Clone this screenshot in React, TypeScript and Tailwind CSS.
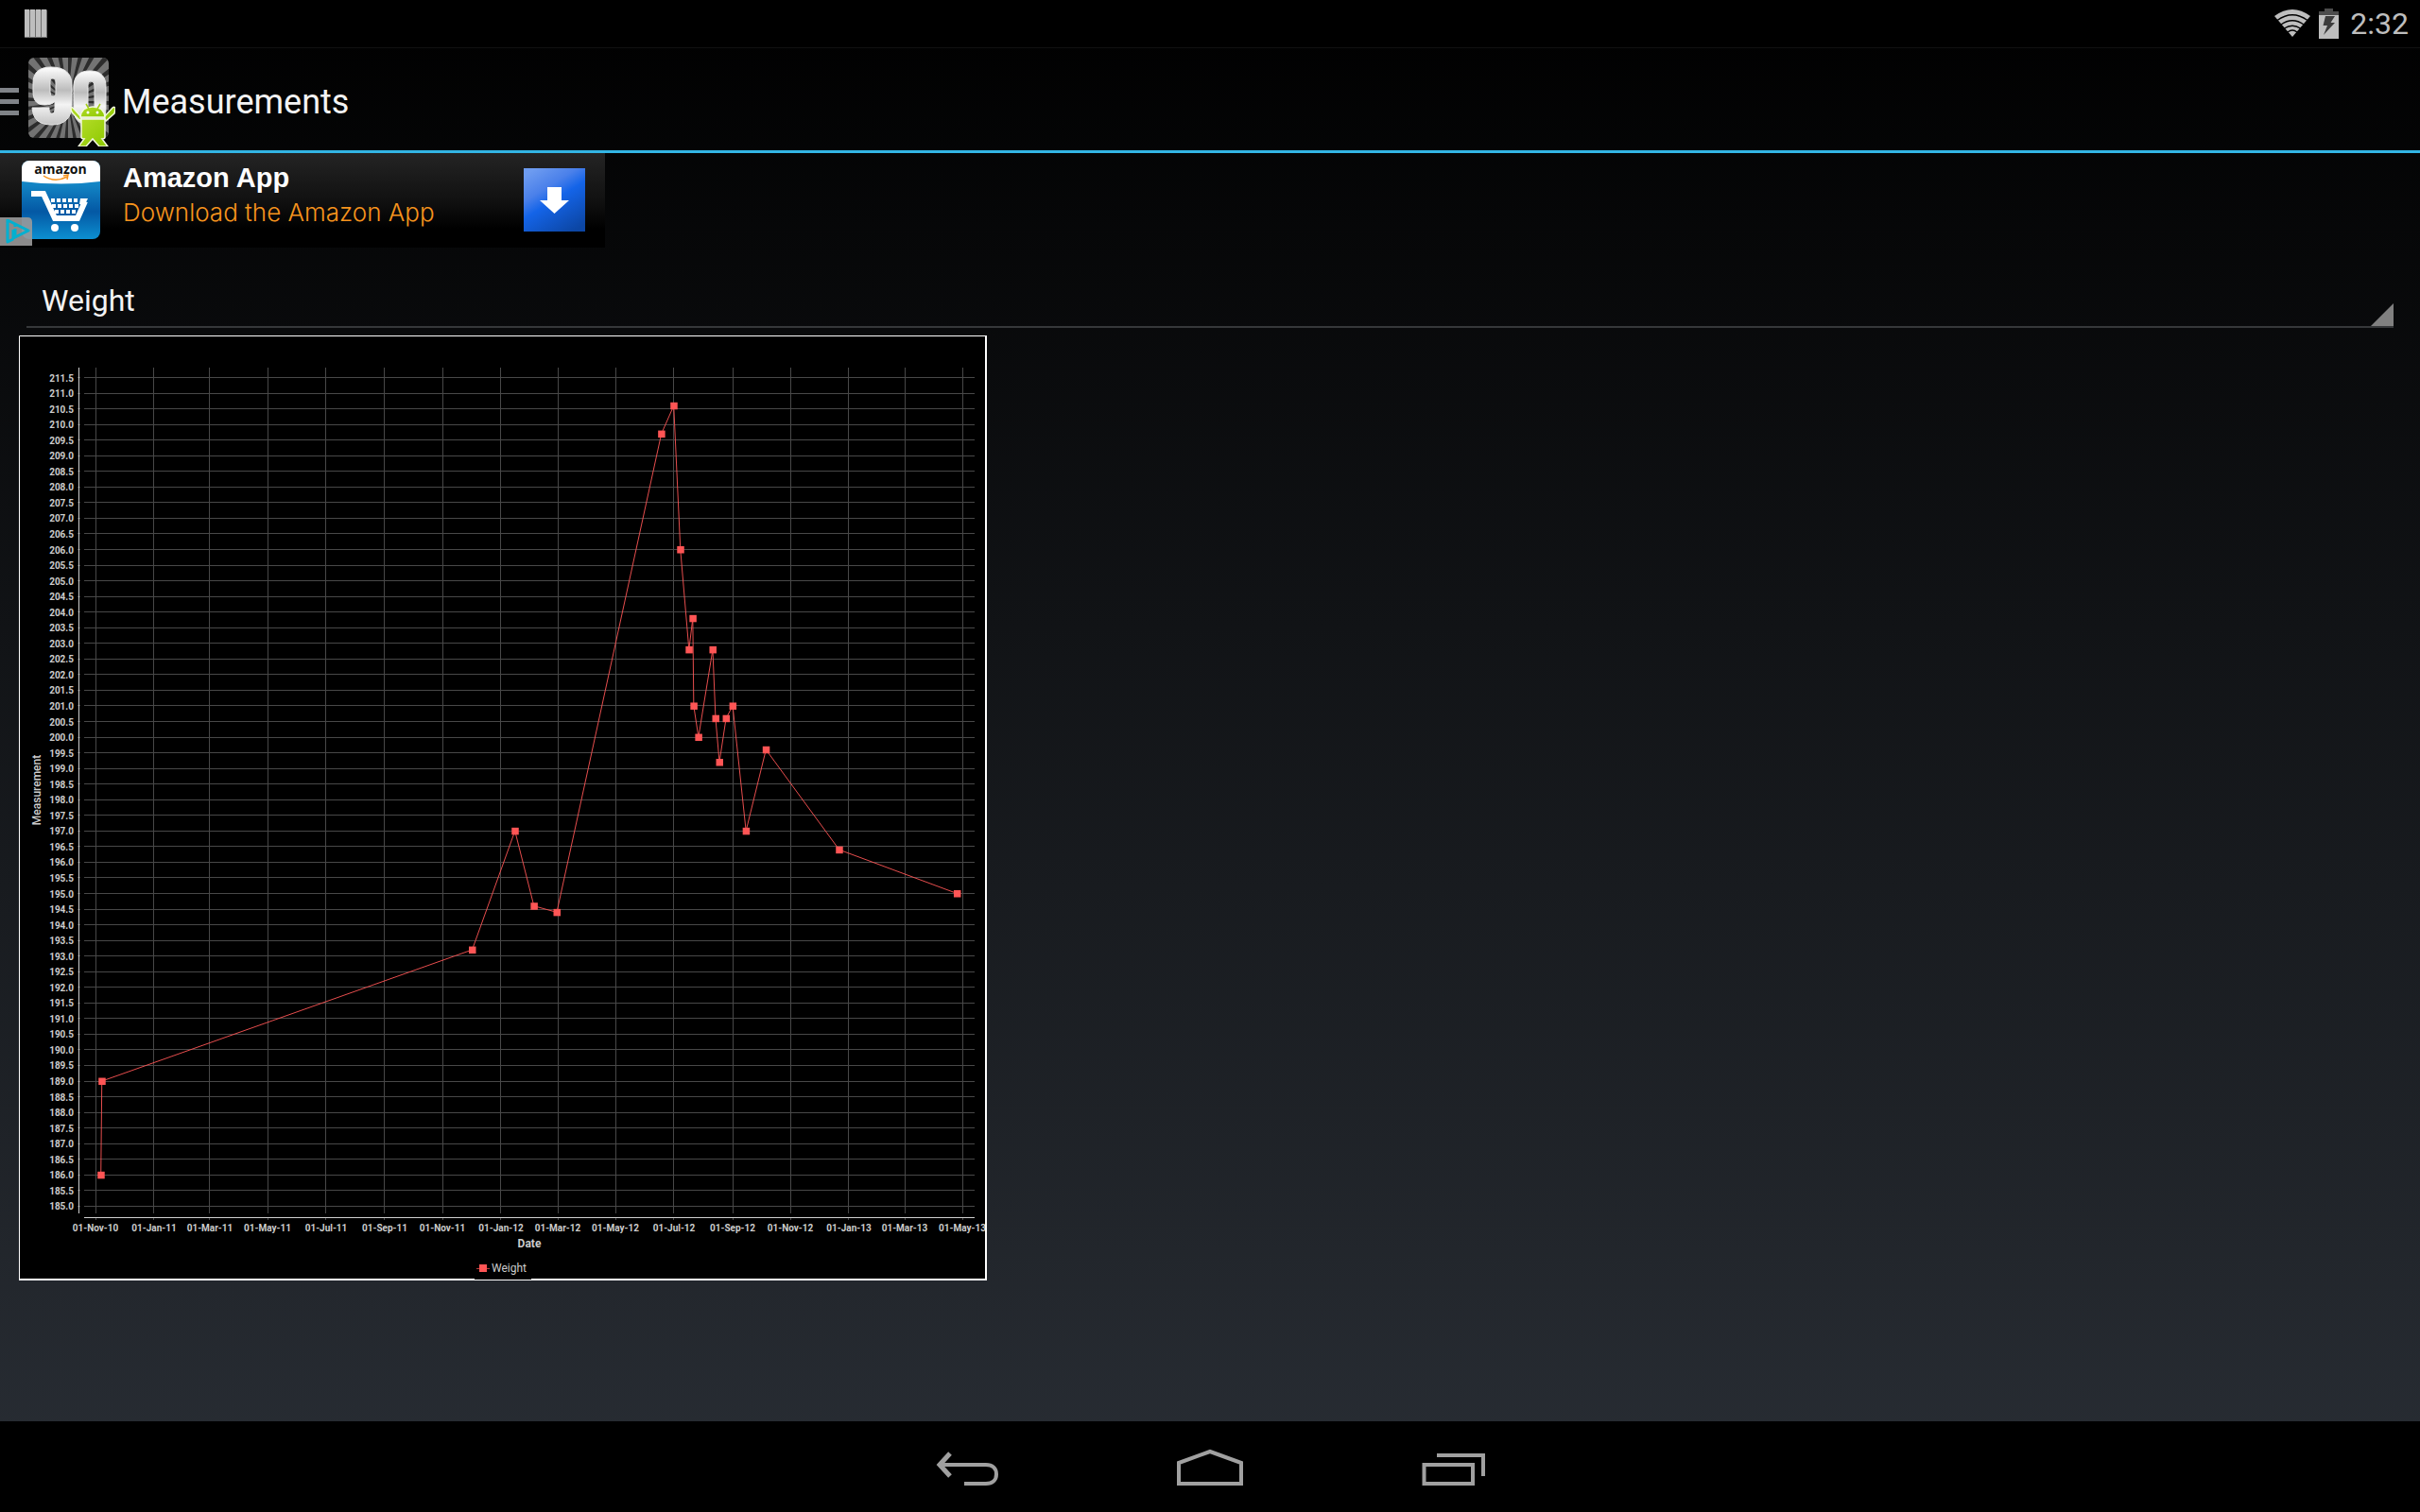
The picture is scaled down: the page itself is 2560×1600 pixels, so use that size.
import type { ReactNode } from "react";

interface Reading {
  day: number;
  value: number;
}

// day = days since 01-Nov-10
const readings: Reading[] = [
  { day: 5.5, value: 186 },
  { day: 6.5, value: 189 },
  { day: 396, value: 193.2 },
  { day: 441, value: 197 },
  { day: 461, value: 194.6 },
  { day: 485, value: 194.4 },
  { day: 595, value: 209.7 },
  { day: 608, value: 210.6 },
  { day: 615, value: 206 },
  { day: 624, value: 202.8 },
  { day: 628, value: 203.8 },
  { day: 629, value: 201 },
  { day: 634, value: 200 },
  { day: 649, value: 202.8 },
  { day: 652, value: 200.6 },
  { day: 656, value: 199.2 },
  { day: 663, value: 200.6 },
  { day: 670, value: 201 },
  { day: 684, value: 197 },
  { day: 705, value: 199.6 },
  { day: 782, value: 196.4 },
  { day: 906, value: 195 },
];

const months = [
  { label: "01-Nov-10", day: 0 },
  { label: "01-Jan-11", day: 61 },
  { label: "01-Mar-11", day: 120 },
  { label: "01-May-11", day: 181 },
  { label: "01-Jul-11", day: 242 },
  { label: "01-Sep-11", day: 304 },
  { label: "01-Nov-11", day: 365 },
  { label: "01-Jan-12", day: 426 },
  { label: "01-Mar-12", day: 486 },
  { label: "01-May-12", day: 547 },
  { label: "01-Jul-12", day: 608 },
  { label: "01-Sep-12", day: 670 },
  { label: "01-Nov-12", day: 731 },
  { label: "01-Jan-13", day: 792 },
  { label: "01-Mar-13", day: 851 },
  { label: "01-May-13", day: 912 },
];

const levels = Array.from({ length: 54 }, (_, i) => 185 + i * 0.5);

const xOf = (day: number) => 81.2 + day * 1.0058;
const yOf = (value: number) => 921.4 - (value - 185) * 33.09;
const snap = (n: number) => Math.floor(n) + 0.5;

function WeightChart() {
  return (
    <svg
      viewBox="0 0 1024 1000"
      role="img"
      aria-label="Weight by date"
      className="block w-full max-w-[1024px] bg-black font-[Roboto,sans-serif]"
    >
      <g stroke="#484848">
        {levels.map((v) => (
          <path key={v} d={`M62 ${snap(yOf(v))}H65M69 ${snap(yOf(v))}H1011`} />
        ))}
        {months.map((m) => (
          <path key={m.label} d={`M${snap(xOf(m.day))} 34V929M${snap(xOf(m.day))} 934V936`} />
        ))}
      </g>
      <path d="M63.5 34V929M69 933.5H1011" stroke="#d0d0d0" fill="none" />

      <g fill="#cccccc" fontSize="10" fontWeight="700">
        {levels.map((v) => (
          <text key={v} x="58" y={Math.round(yOf(v)) + 4} textAnchor="end">
            {v.toFixed(1)}
          </text>
        ))}
        {months.map((m) => (
          <text key={m.label} x={Math.round(xOf(m.day))} y="948" textAnchor="middle">
            {m.label}
          </text>
        ))}
        <text x="540" y="965" fontSize="12" textAnchor="middle">
          Date
        </text>
        <text transform="translate(23 481) rotate(-90)" fontSize="12" fontWeight="500" textAnchor="middle">
          Measurement
        </text>
      </g>

      <polyline
        points={readings.map((r) => `${xOf(r.day)},${yOf(r.value)}`).join(" ")}
        fill="none"
        stroke="#ff5555"
        strokeOpacity="0.9"
      />
      {readings.map((r) => (
        <rect key={r.day} x={xOf(r.day) - 3.5} y={yOf(r.value) - 3.5} width="7.5" height="7.5" fill="#ff5555" />
      ))}

      <path d="M0.5 1000V0.5H1024" fill="none" stroke="#fff" />
      <path d="M0 999H1023V0" fill="none" stroke="#fff" strokeWidth="2" />
      <rect x="482" y="970" width="60" height="29" fill="#000" />
      <path d="M484 987.5H498" stroke="#ff5555" strokeOpacity="0.7" />
      <rect x="487" y="983" width="8" height="8" fill="#ff5555" />
      <text x="500" y="991" fontSize="12" fill="#cccccc">
        Weight
      </text>
    </svg>
  );
}

function StatusBar() {
  return (
    <div className="flex h-[50px] items-center justify-between bg-black pl-[26px] pr-3">
      <svg width="24" height="30" viewBox="0 0 24 30" aria-hidden="true">
        {[0, 6, 12, 18].map((x) => (
          <g key={x}>
            <path d={`M${x} 0H${x + 5}L${x + 6} 1V30H${x}Z`} fill="#6e6e6e" />
            <rect x={x} y="0" width="5" height="29" fill="#bebebe" />
          </g>
        ))}
      </svg>
      <div className="flex items-center">
        <svg width="40" height="30" viewBox="0 0 40 30" aria-hidden="true">
          <path d="M1 7Q20 -7 39 7L20 29Z" fill="#bebebe" />
          <path
            d="M4 11.5Q20 0 36 11.5M8 16Q20 7.5 32 16M11.5 20Q20 14.5 28.5 20M15 24Q20 20 25 24"
            fill="none"
            stroke="#000"
            strokeWidth="1.3"
          />
        </svg>
        <svg width="21" height="32" viewBox="0 0 21 32" className="ml-2" aria-hidden="true">
          <path d="M6 0H15V3H21V7H0V3H6Z" fill="#4c4c4c" />
          <rect y="7" width="21" height="25" fill="#bebebe" />
          <path d="M7 8H17L12.5 15H17L5 28L9 18H4.5Z" fill="#3c3c3c" />
        </svg>
        <span className="ml-3 font-[Roboto,sans-serif] text-[32px] leading-[50px] text-[#bebebe]">2:32</span>
      </div>
    </div>
  );
}

function AppIcon() {
  const rays = Array.from({ length: 28 }, (_, i) => {
    const a = (i * Math.PI * 2) / 28;
    const b = a + 0.09;
    return `M42 46L${42 + 90 * Math.cos(a)} ${46 + 90 * Math.sin(a)}L${42 + 90 * Math.cos(b)} ${46 + 90 * Math.sin(b)}Z`;
  });
  return (
    <svg width="92" height="94" viewBox="0 0 92 94" aria-hidden="true">
      <defs>
        <clipPath id="tile">
          <rect width="85" height="85" rx="6" />
        </clipPath>
        <linearGradient id="chrome" x1="0" y1="0" x2="0" y2="1">
          <stop offset="0" stopColor="#ffffff" />
          <stop offset="0.4" stopColor="#bcbcbc" />
          <stop offset="0.65" stopColor="#f4f4f4" />
          <stop offset="1" stopColor="#c4c4c4" />
        </linearGradient>
        <linearGradient id="droid" x1="0" y1="0" x2="1" y2="1">
          <stop offset="0" stopColor="#b4dc28" />
          <stop offset="1" stopColor="#8cc800" />
        </linearGradient>
      </defs>
      <g clipPath="url(#tile)">
        <rect width="85" height="85" fill="#737373" />
        <path d={rays.join("")} fill="#2c2c2c" />
      </g>
      <path
        d="M24 10C38 10 46 16 46 29V50C46 64 38 71 25 71C12 71 5 66 4 53H22C22 58 23 59 25 59C28 59 28 57 28 50V46C26 49 22 50 17 50C8 50 5 44 5 36V27C5 16 11 10 24 10ZM26 22C23 22 23 24 23 27V36C23 39 24 41 26 41C29 41 29 39 29 35V27C29 24 29 22 26 22Z"
        fill="url(#chrome)"
        fillRule="evenodd"
        stroke="#e8e8e8"
      />
      <path
        d="M65 14C77 14 82 20 82 31V54C82 65 77 71 65 71C53 71 48 65 48 54V31C48 20 53 14 65 14ZM66 25C63 25 63 28 63 31V52C63 56 64 58 66 58C69 58 70 56 70 52V31C70 28 69 25 66 25Z"
        fill="url(#chrome)"
        fillRule="evenodd"
        stroke="#e8e8e8"
      />
      <g fill="url(#droid)" stroke="#f2f8df" strokeWidth="1.5">
        <path d="M56 63L48 54Q45 51 45 54Q45 57 47 59L55 67ZM80 63L89 53Q92 51 92 55L91 59L82 67Z" />
        <path d="M55 63Q56 52 68 52Q80 52 81 63Z" />
        <path d="M56 65H81V84Q81 86 78 86L84 94H75L68 86L61 94H53L59 86Q56 86 56 84Z" />
      </g>
      <path d="M61 49L64 54M76 49L73 54" stroke="#a4d018" strokeWidth="1.5" />
      <circle cx="63" cy="58" r="1.5" fill="#fff" />
      <circle cx="73" cy="58" r="1.5" fill="#fff" />
    </svg>
  );
}

function ActionBar() {
  return (
    <header className="flex h-[112px] items-center border-b-[3px] border-t border-b-[#33b5e5] border-t-[#111] pt-1.5">
      <button type="button" aria-label="Open menu" className="flex items-center gap-[10px]">
        <svg width="20" height="30" viewBox="0 0 20 30" aria-hidden="true">
          <path d="M0 2.5H20M0 14.5H20M0 26.5H20" stroke="#808388" strokeWidth="5" />
        </svg>
        <AppIcon />
      </button>
      <h1 className="ml-[7px] font-[Roboto,sans-serif] text-[36px] text-[#f3f3f3]">Measurements</h1>
    </header>
  );
}

function AmazonIcon() {
  return (
    <svg width="83" height="83" viewBox="0 0 83 83" aria-hidden="true">
      <defs>
        <linearGradient id="shop" x1="0" y1="0" x2="0" y2="1">
          <stop offset="0.3" stopColor="#1285c5" />
          <stop offset="0.65" stopColor="#0458a4" />
          <stop offset="1" stopColor="#0c8fd0" />
        </linearGradient>
        <clipPath id="shop-tile">
          <rect width="83" height="83" rx="8" />
        </clipPath>
      </defs>
      <g clipPath="url(#shop-tile)">
        <rect width="83" height="83" fill="url(#shop)" />
        <path d="M0 0H83V22Q42 27 0 22Z" fill="#fff" />
      </g>
      <text x="41" y="14" textAnchor="middle" fontSize="14" fontWeight="700" fill="#111" className="font-[Open_Sans,sans-serif]">
        amazon
      </text>
      <path d="M23 16Q35 24 48 17M44 16L49 15L48 20" fill="none" stroke="#f7941d" strokeWidth="1.5" />
      <path d="M10 35H23L35 61H59L67 43" fill="none" stroke="#fff" strokeWidth="6" />
      <path d="M62 40H70L67 46H61Z" fill="#fff" />
      <path d="M31 42H61M32 48H60M35 54H58" stroke="#fff" strokeWidth="4" strokeDasharray="4 2" />
      <circle cx="35" cy="71" r="4" fill="#fff" />
      <circle cx="56" cy="71" r="4" fill="#fff" />
    </svg>
  );
}

function AdBanner() {
  return (
    <a
      href="#amazon-app"
      className="relative flex h-[100px] w-[640px] items-start bg-linear-to-b/srgb from-[#242424] via-[#111111] via-50% to-black to-80% pl-[23px] pr-[21px] pt-2"
    >
      <AmazonIcon />
      <div className="ml-6 flex-1">
        <div className="font-[Liberation_Sans,Arial,sans-serif] text-[29px] font-bold leading-9 text-white">
          Amazon App
        </div>
        <div className="font-[Inter,sans-serif] text-[26px] font-light leading-[38px] text-[#f7941d]">
          Download the Amazon App
        </div>
      </div>
      <svg width="65" height="67" viewBox="0 0 65 67" className="mt-2" aria-hidden="true">
        <defs>
          <linearGradient id="dl" x1="0.2" y1="0" x2="0.8" y2="1">
            <stop offset="0" stopColor="#6d9bf0" />
            <stop offset="0.3" stopColor="#4a80ea" />
            <stop offset="0.5" stopColor="#1464e8" />
            <stop offset="1" stopColor="#0c46a4" />
          </linearGradient>
        </defs>
        <rect width="65" height="67" fill="url(#dl)" />
        <path d="M25 20H40V34H48L32.5 48L17 34H25Z" fill="#fff" />
      </svg>
      <svg width="34" height="30" viewBox="0 0 34 30" className="absolute bottom-0.5 left-0" aria-hidden="true">
        <path d="M0 0H29Q34 0 34 5V30H0Z" fill="#9a9a9a" fillOpacity="0.9" />
        <path d="M8 3L30 14L14 22V13M8 2V26L14 23" fill="none" stroke="#00b0d0" strokeWidth="3" strokeLinejoin="round" />
        <path d="M16 8V10M16 12V19" stroke="#00b0d0" strokeWidth="3" />
      </svg>
    </a>
  );
}

function MeasurementSelect() {
  return (
    <div className="relative mx-7 mt-7 h-[57px] border-b-2 border-[#36383a]">
      <select
        aria-label="Measurement type"
        className="h-full w-full appearance-none bg-transparent pl-4 font-[Roboto,sans-serif] text-[32px] text-[#f3f3f3] outline-none"
      >
        <option>Weight</option>
      </select>
      <svg width="24" height="24" viewBox="0 0 24 24" className="pointer-events-none absolute bottom-0 right-0" aria-hidden="true">
        <path d="M24 0V24H0Z" fill="#808080" />
      </svg>
    </div>
  );
}

function NavButton({ label, children }: { label: string; children: ReactNode }) {
  return (
    <button type="button" aria-label={label} className="flex h-full w-[258px] items-center justify-center">
      <svg width="72" height="48" viewBox="0 0 72 48" fill="none" stroke="#a0a0a0" strokeWidth="4">
        {children}
      </svg>
    </button>
  );
}

function NavBar() {
  return (
    <nav className="flex h-24 items-center justify-center bg-black">
      <NavButton label="Back">
        <path d="M8 22H57C64 22 68 26 68 32C68 38 64 42 57 42H34" />
        <path d="M19 10L8 22L19 34" strokeWidth="5" />
      </NavButton>
      <NavButton label="Home">
        <path d="M3 42V20L36 8L69 20V42Z" />
      </NavButton>
      <NavButton label="Recent apps">
        <path d="M4.5 22H56V42H4.5Z" />
        <path d="M18 12H67V34" />
      </NavButton>
    </nav>
  );
}

export default function App() {
  return (
    <div className="flex min-h-screen flex-col bg-linear-to-b/srgb from-black to-[#292e35]">
      <StatusBar />
      <ActionBar />
      <main className="flex-1">
        <AdBanner />
        <MeasurementSelect />
        <div className="ml-5 mt-2">
          <WeightChart />
        </div>
      </main>
      <NavBar />
    </div>
  );
}
